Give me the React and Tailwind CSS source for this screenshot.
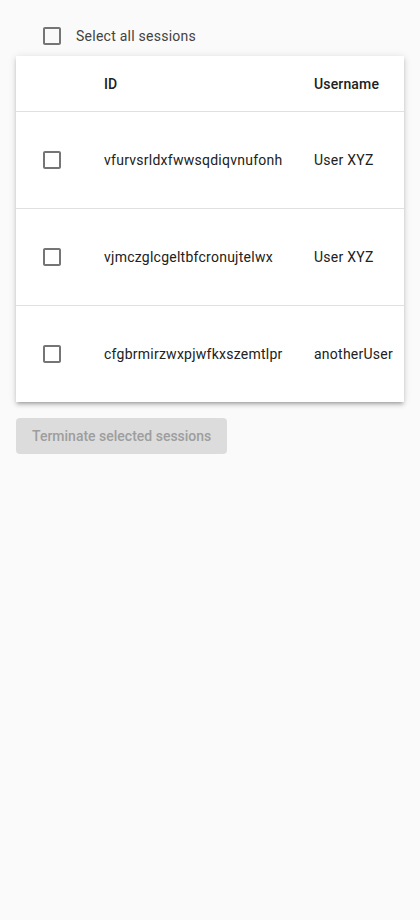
import React, { useState } from 'react'

const sessions = [
  { id: 'vfurvsrldxfwwsqdiqvnufonh', username: 'User XYZ' },
  { id: 'vjmczglcgeltbfcronujtelwx', username: 'User XYZ' },
  { id: 'cfgbrmirzwxpjwfkxszemtlpr', username: 'anotherUser' },
]

function CheckBox({ checked, onClick }) {
  return (
    <button onClick={onClick} className="w-6 h-6 flex items-center justify-center text-[#757575]">
      <svg viewBox="0 0 24 24" width="24" height="24" fill="currentColor">
        {checked ? (
          <path d="M19 3H5c-1.11 0-2 .9-2 2v14c0 1.1.89 2 2 2h14c1.11 0 2-.9 2-2V5c0-1.1-.89-2-2-2zm-9 14l-5-5 1.41-1.41L10 14.17l7.59-7.59L19 8l-9 9z" />
        ) : (
          <path d="M19 5v14H5V5h14m0-2H5c-1.1 0-2 .9-2 2v14c0 1.1.9 2 2 2h14c1.1 0 2-.9 2-2V5c0-1.1-.9-2-2-2z" />
        )}
      </svg>
    </button>
  )
}

export default function App() {
  const [selected, setSelected] = useState([])

  const toggle = (id) => {
    setSelected(selected.includes(id) ? selected.filter((s) => s !== id) : [...selected, id])
  }
  const allSelected = selected.length === sessions.length

  return (
    <div className="min-h-[920px] bg-[#fafafa] px-4 pt-4 font-['Roboto',sans-serif] text-[#212121] tracking-[0.25px]">
      <div className="h-10 flex items-center pl-6 gap-3">
        <CheckBox checked={allSelected} onClick={() => setSelected(allSelected ? [] : sessions.map((s) => s.id))} />
        <span className="text-sm text-[#424242]">Select all sessions</span>
      </div>

      <div className="bg-white overflow-hidden shadow-[0_3px_3px_-2px_rgba(0,0,0,0.2),0_3px_4px_0_rgba(0,0,0,0.14),0_1px_8px_0_rgba(0,0,0,0.12)]">
        <div className="flex h-14 items-center border-b border-[#e0e0e0] text-sm font-medium tracking-[0.15px]">
          <div className="w-[72px] shrink-0" />
          <div className="w-[210px] shrink-0 px-4">ID</div>
          <div className="w-[200px] shrink-0 px-4">Username</div>
        </div>
        {sessions.map((s, i) => (
          <div
            key={s.id}
            className={`flex items-center text-sm ${i < sessions.length - 1 ? 'h-[97px] border-b border-[#e0e0e0]' : 'h-24'}`}
          >
            <div className="w-[72px] shrink-0 pl-6">
              <CheckBox checked={selected.includes(s.id)} onClick={() => toggle(s.id)} />
            </div>
            <div className="w-[210px] shrink-0 px-4">{s.id}</div>
            <div className="w-[200px] shrink-0 px-4">{s.username}</div>
          </div>
        ))}
      </div>

      <button
        disabled
        className="mt-4 h-9 px-4 rounded bg-[#dcdcdc] text-sm font-medium text-[#9e9e9e] tracking-normal"
      >
        Terminate selected sessions
      </button>
    </div>
  )
}
